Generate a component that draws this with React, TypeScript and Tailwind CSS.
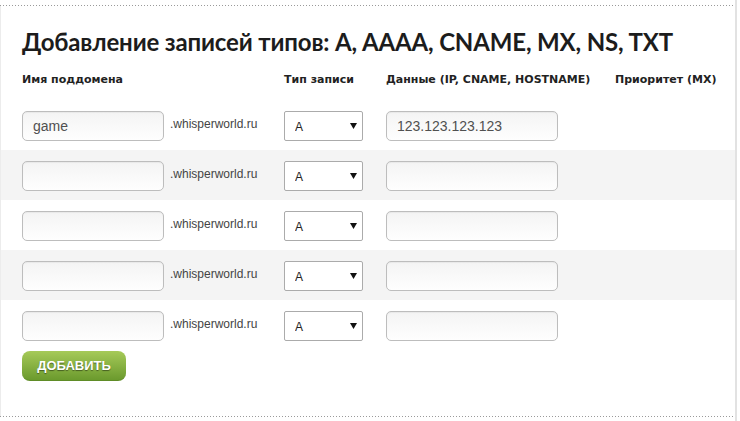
import React from "react";

const rows = [
  { sub: "game", data: "123.123.123.123" },
  { sub: "", data: "" },
  { sub: "", data: "" },
  { sub: "", data: "" },
  { sub: "", data: "" },
];

function Dotted() {
  return (
    <div className="h-px w-full bg-[linear-gradient(to_right,#9a9a9a_1px,transparent_1px)] bg-[length:3px_1px]" />
  );
}

function TextInput({ value, width }: { value: string; width: string }) {
  return (
    <input
      type="text"
      defaultValue={value}
      className={`${width} h-[30px] rounded-[5px] border border-[#bdbdbd] bg-linear-to-b from-[#f4f4f4] to-[#fefefe] pl-[10px] font-['Liberation_Sans',Arial,sans-serif] text-[14px] text-[#505050] shadow-[inset_0_1px_1px_rgba(0,0,0,0.05)] outline-none`}
    />
  );
}

function TypeSelect() {
  return (
    <div className="relative h-[30px] w-[79px]">
      <select
        defaultValue="A"
        className="h-full w-full appearance-none rounded-[2px] border border-[#ababab] bg-white pl-[10px] pt-[2px] font-['Liberation_Sans',Arial,sans-serif] text-[12px] text-[#222] outline-none"
      >
        <option value="A">A</option>
        <option value="AAAA">AAAA</option>
        <option value="CNAME">CNAME</option>
        <option value="MX">MX</option>
        <option value="NS">NS</option>
        <option value="TXT">TXT</option>
      </select>
      <svg
        width="7"
        height="6"
        viewBox="0 0 7 6"
        className="pointer-events-none absolute right-[6px] top-[12px]"
        aria-hidden
      >
        <polygon points="0,0 7,0 3.5,6" fill="#111" />
      </svg>
    </div>
  );
}

export default function App() {
  return (
    <div className="flex h-[421px] w-[740px] bg-white">
      <div className="flex h-full w-[737px] flex-col border-r-2 border-[#e2e2e2]">
        <div className="h-[5px]" />
        <Dotted />
        <div className="flex flex-1 flex-col border-l border-[#ececec]">
          <h1 className="ml-[21px] mt-[21px] h-[30px] font-['Lato',sans-serif] text-[24px] font-bold leading-[30px] tracking-[-0.15px] text-[#1c1c1c]">
            Добавление записей типов: A, AAAA, CNAME, MX, NS, TXT
          </h1>
          <div className="grid h-[43px] grid-cols-[262px_102px_229px_1fr] pl-[21px] pt-[16px] font-['DejaVu_Sans',Verdana,sans-serif] text-[11px] font-bold leading-[14px] text-[#222]">
            <div>Имя поддомена</div>
            <div>Тип записи</div>
            <div>Данные (IP, CNAME, HOSTNAME)</div>
            <div>Приоритет (MX)</div>
          </div>
          {rows.map((r, i) => (
            <div
              key={i}
              className={`grid h-[50px] grid-cols-[262px_102px_229px_1fr] items-start pl-[21px] pt-[11px] ${
                i % 2 === 1 ? "bg-[#f4f4f4]" : "bg-white"
              }`}
            >
              <div className="flex items-start">
                <TextInput value={r.sub} width="w-[142px]" />
                <span className="ml-[6px] mt-[6px] font-['Liberation_Sans',Arial,sans-serif] text-[12px] leading-[14px] text-[#444]">
                  .whisperworld.ru
                </span>
              </div>
              <TypeSelect />
              <TextInput value={r.data} width="w-[172px]" />
              <div />
            </div>
          ))}
          <div className="mt-px pl-[21px]">
            <button
              type="button"
              className="h-[30px] w-[104px] rounded-[8px] border-b border-[#5f8c26] bg-linear-to-b from-[#a6ca58] to-[#6b9a2d] font-['Liberation_Sans',Arial,sans-serif] text-[13px] font-bold text-white [text-shadow:0_1px_1px_rgba(0,0,0,0.45)]"
            >
              ДОБАВИТЬ
            </button>
          </div>
        </div>
        <Dotted />
        <div className="h-[4px]" />
      </div>
    </div>
  );
}
